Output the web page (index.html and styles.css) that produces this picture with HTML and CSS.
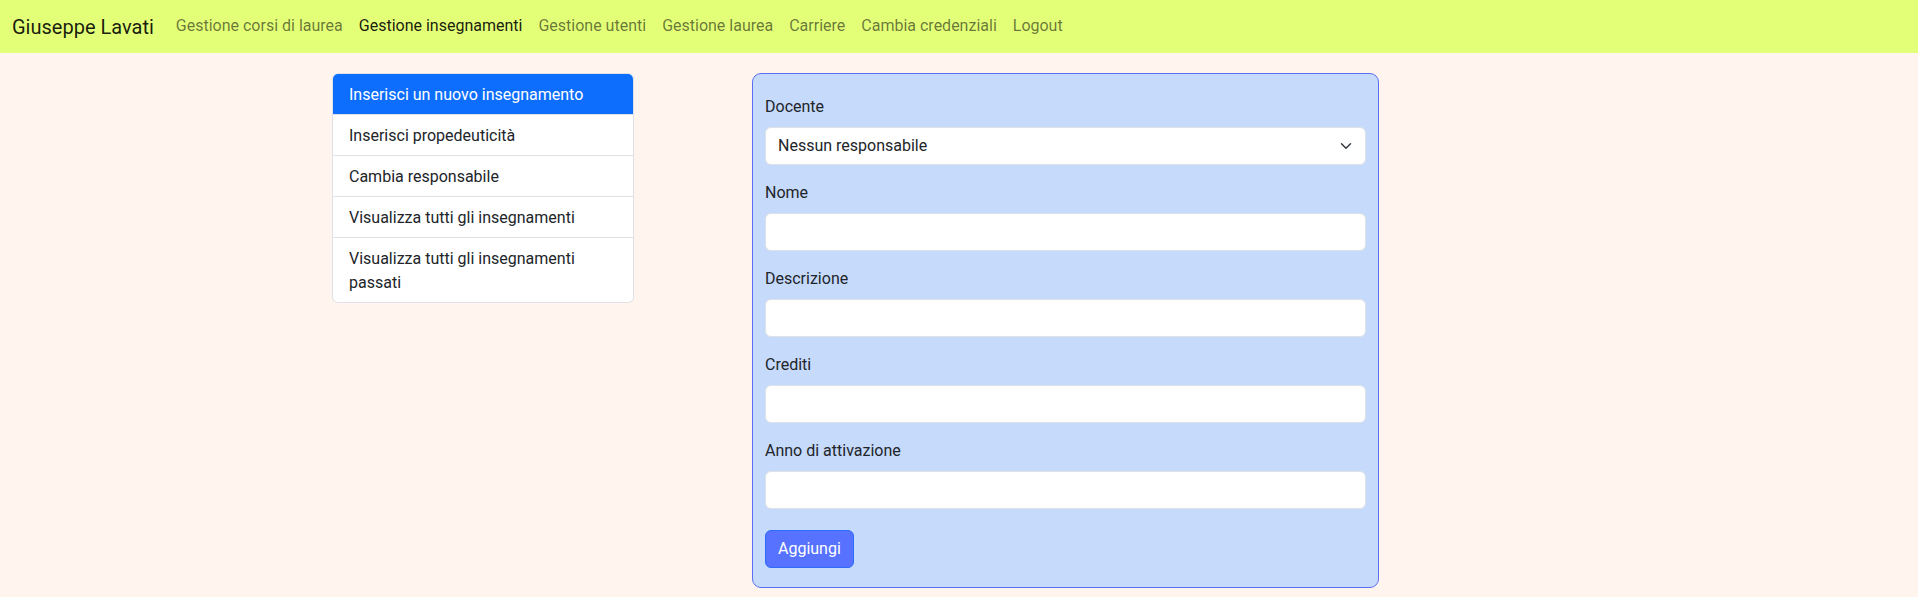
FILE: index.html
```
<!DOCTYPE html>
<html lang="it">
<head>
<meta charset="utf-8">
<title>Gestione insegnamenti</title>
<link rel="stylesheet" href="styles.css">
</head>
<body>
<nav class="navbar">
  <a class="brand" href="#">Giuseppe Lavati</a>
  <ul class="nav">
    <li><a class="nav-link" href="#">Gestione corsi di laurea</a></li>
    <li><a class="nav-link active" href="#">Gestione insegnamenti</a></li>
    <li><a class="nav-link" href="#">Gestione utenti</a></li>
    <li><a class="nav-link" href="#">Gestione laurea</a></li>
    <li><a class="nav-link" href="#">Carriere</a></li>
    <li><a class="nav-link" href="#">Cambia credenziali</a></li>
    <li><a class="nav-link" href="#">Logout</a></li>
  </ul>
</nav>
<main class="main">
  <div class="list-group">
    <a class="list-item active" href="#">Inserisci un nuovo insegnamento</a>
    <a class="list-item" href="#">Inserisci propedeuticità</a>
    <a class="list-item" href="#">Cambia responsabile</a>
    <a class="list-item" href="#">Visualizza tutti gli insegnamenti</a>
    <a class="list-item" href="#">Visualizza tutti gli insegnamenti passati</a>
  </div>
  <form class="card">
    <div class="group">
      <label class="label">Docente</label>
      <div class="select">
        <span>Nessun responsabile</span>
        <svg class="chev" width="16" height="12" viewBox="0 0 16 16"><path d="m2 5 6 6 6-6" fill="none" stroke="#343a40" stroke-linecap="round" stroke-linejoin="round" stroke-width="2"/></svg>
      </div>
    </div>
    <div class="group">
      <label class="label">Nome</label>
      <input class="input" type="text">
    </div>
    <div class="group">
      <label class="label">Descrizione</label>
      <input class="input" type="text">
    </div>
    <div class="group">
      <label class="label">Crediti</label>
      <input class="input" type="text">
    </div>
    <div class="group">
      <label class="label">Anno di attivazione</label>
      <input class="input" type="text">
    </div>
    <button class="btn" type="button">Aggiungi</button>
  </form>
</main>
</body>
</html>
```
FILE: styles.css
```
* { box-sizing: border-box; }
html, body { margin: 0; padding: 0; }
body {
  background: #fff5ee;
  font-family: Roboto, "Open Sans", sans-serif;
  font-size: 16px;
  line-height: 24px;
  color: #212529;
  height: 597px;
  overflow: hidden;
}
a { text-decoration: none; }
.navbar {
  height: 53px;
  background: #e3ff78;
  display: flex;
  align-items: center;
  padding: 0 12px 0 12px;
}
.brand {
  font-size: 20px;
  line-height: 30px;
  color: rgba(0,0,0,.9);
  margin-right: 14px;
}
.nav { display: flex; list-style: none; margin: 0; padding: 0; }
.nav-link {
  display: block;
  padding: 7px 8px 9px 8px;
  color: rgba(0,0,0,.55);
}
.nav-link.active { color: rgba(0,0,0,.9); }
.main {
  display: flex;
  align-items: flex-start;
  padding: 20px 0 0 332px;
  gap: 118px;
}
.list-group {
  width: 302px;
  display: flex;
  flex-direction: column;
  border: 1px solid #dee2e6;
  border-radius: 6px;
  background: #fff;
  overflow: hidden;
}
.list-item {
  display: block;
  padding: 9px 16px 7px 16px;
  color: #212529;
  border-top: 1px solid #dee2e6;
}
.list-item:first-child { border-top: 0; }
.list-item.active {
  background: #0d6efd;
  color: #fff;
  margin: -1px -1px 0 -1px;
  padding: 10px 17px 7px 17px;
}
.card {
  width: 627px;
  margin: 0;
  background: #c6dafc;
  border: 1px solid #5b6ef2;
  border-radius: 9px;
  padding: 21px 12px 19px 12px;
}
.group { margin-bottom: 16px; }
.group:nth-child(5) { margin-bottom: 21px; }
.label { display: block; margin-bottom: 8px; }
.select, .input {
  display: flex;
  align-items: center;
  justify-content: space-between;
  width: 100%;
  height: 38px;
  background: #fff;
  border: 1px solid #dee2e6;
  border-radius: 6px;
  padding: 6px 11px 6px 12px;
  font: inherit;
  color: #212529;
}
.chev { display: block; }
.btn {
  display: block;
  height: 38px;
  padding: 6px 12px;
  font: inherit;
  color: #fff;
  background: #5672ff;
  border: 1px solid #2c6cf8;
  border-radius: 6px;
}
```
